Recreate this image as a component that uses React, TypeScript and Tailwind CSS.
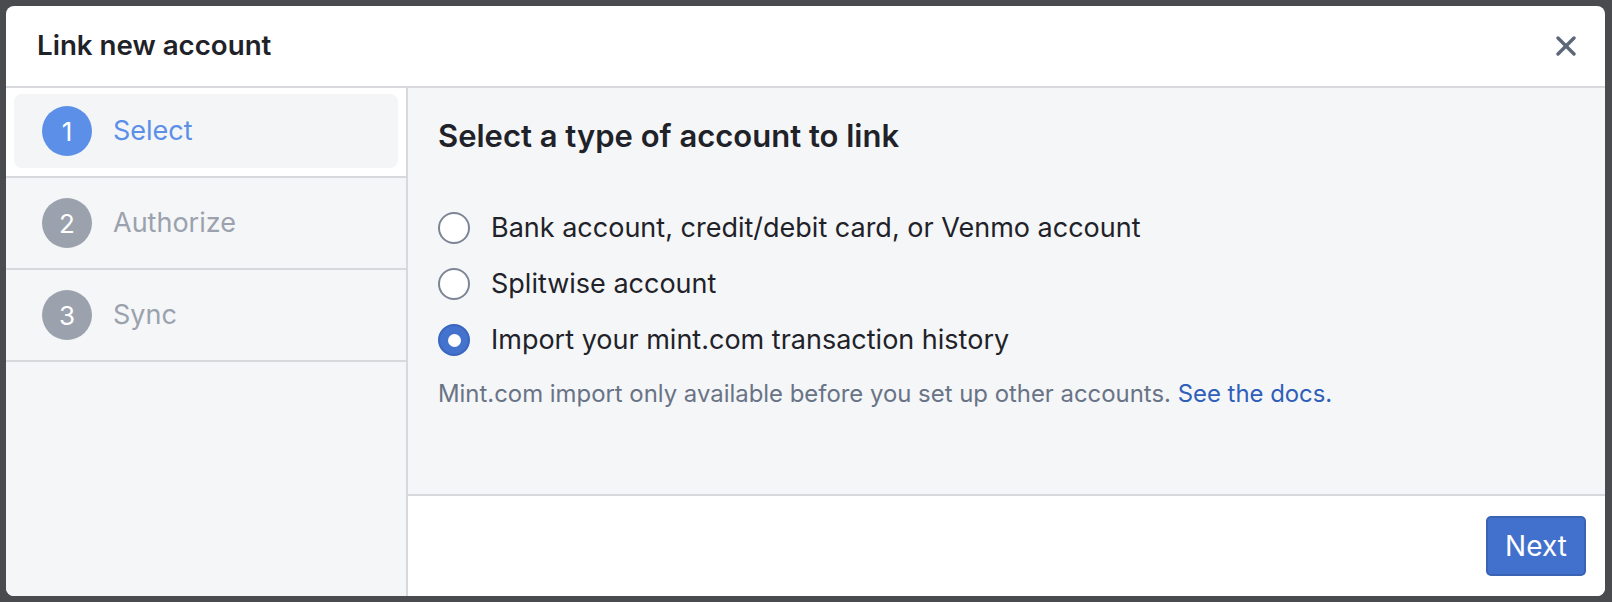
import React, { useState } from "react";

const steps = [
  { n: 1, label: "Select" },
  { n: 2, label: "Authorize" },
  { n: 3, label: "Sync" },
];

const options = [
  { id: "bank", label: "Bank account, credit/debit card, or Venmo account" },
  { id: "splitwise", label: "Splitwise account" },
  { id: "mint", label: "Import your mint.com transaction history" },
];

function Radio({ checked }: { checked: boolean }) {
  if (checked) {
    return (
      <span className="flex h-[32px] w-[32px] shrink-0 items-center justify-center rounded-full border-2 border-[#3a66bf] bg-[#4373cd]">
        <span className="h-[13px] w-[13px] rounded-full bg-white" />
      </span>
    );
  }
  return <span className="h-[32px] w-[32px] shrink-0 rounded-full border-[2.5px] border-[#7d8696] bg-white" />;
}

export default function App() {
  const [selected, setSelected] = useState("mint");
  const current = 1;

  return (
    <div
      className="h-[602px] w-full bg-[#4a4b4f] pt-[6px] pb-[6px] pl-[6px] pr-[7px]"
      style={{ fontFamily: "Inter, 'Noto Sans', sans-serif" }}
    >
      <div className="flex h-full flex-col overflow-hidden rounded-[8px] bg-white">
        {/* header */}
        <div className="flex h-[82px] shrink-0 items-center justify-between border-b-2 border-[#d8d9dc] pl-[31px] pr-[29px]">
          <h1 className="text-[27.7px] font-semibold leading-none text-[#1f2329]">Link new account</h1>
          <button className="flex h-[20px] w-[20px] items-center justify-center text-[#5c6778]" aria-label="Close">
            <svg width="20" height="20" viewBox="0 0 20 20" fill="none" stroke="currentColor" strokeWidth="3.4" strokeLinecap="round">
              <line x1="2" y1="2" x2="18" y2="18" />
              <line x1="18" y1="2" x2="2" y2="18" />
            </svg>
          </button>
        </div>

        <div className="flex min-h-0 flex-1">
          {/* steps */}
          <div className="w-[402px] shrink-0 border-r-2 border-[#d8d9dc] bg-[#f5f6f8]">
            {steps.map((s) => {
              const active = s.n === current;
              if (active) {
                return (
                  <div key={s.n} className="h-[90px] border-b-2 border-[#d8d9dc] bg-white px-[8px] pt-[6px] pb-[8px]">
                    <div className="flex h-full items-center gap-[21px] rounded-[8px] bg-[#f4f5f7] pl-[28px]">
                      <span className="flex h-[50px] w-[50px] items-center justify-center rounded-full bg-[#5b8fe8] text-[26px] text-white">
                        {s.n}
                      </span>
                      <span className="text-[27px] text-[#5b8fe8]">{s.label}</span>
                    </div>
                  </div>
                );
              }
              return (
                <div key={s.n} className="flex h-[92px] items-center gap-[21px] border-b-2 border-[#d8d9dc] pl-[36px]">
                  <span className="flex h-[50px] w-[50px] items-center justify-center rounded-full bg-[#9ba2ad] text-[26px] text-white">
                    {s.n}
                  </span>
                  <span className="text-[27px] text-[#9ba2ad]">{s.label}</span>
                </div>
              );
            })}
          </div>

          {/* content */}
          <div className="flex min-w-0 flex-1 flex-col">
            <div className="flex-1 bg-[#f5f6f8] pl-[30px] pt-[30px]">
              <h2 className="text-[31px] font-semibold leading-[36px] text-[#1f2329]">Select a type of account to link</h2>
              <div className="mt-[46px]">
                {options.map((o) => (
                  <label
                    key={o.id}
                    className="flex h-[56px] cursor-pointer items-center gap-[21px]"
                    onClick={() => setSelected(o.id)}
                  >
                    <Radio checked={selected === o.id} />
                    <span className="text-[27px] text-[#1f2329]">{o.label}</span>
                  </label>
                ))}
              </div>
              <p className="mt-[11px] text-[23.9px] leading-[30px] text-[#697386]">
                Mint.com import only available before you set up other accounts.{" "}
                <a className="text-[#2f5fb8]" href="#">See the docs.</a>
              </p>
            </div>
            <div className="flex h-[102px] shrink-0 justify-end border-t-2 border-[#d8d9dc] bg-white pr-[19px] pt-[20px]">
              <button className="h-[60px] w-[100px] rounded-[5px] border-2 border-[#3a63b5] bg-[#4271cd] text-[28px] text-white">
                Next
              </button>
            </div>
          </div>
        </div>
      </div>
    </div>
  );
}
